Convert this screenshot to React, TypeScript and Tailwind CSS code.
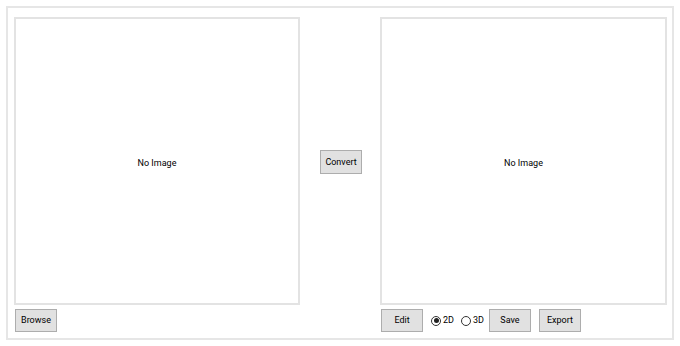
import React from "react";

function Btn({ label, className = "" }: { label: string; className?: string }) {
  return (
    <button
      className={`h-[23px] w-[42px] border border-[#adadad] bg-[#e1e1e1] text-[9px] leading-none text-black flex items-center justify-center ${className}`}
    >
      {label}
    </button>
  );
}

function Radio({ label, checked }: { label: string; checked?: boolean }) {
  return (
    <div className="flex items-center gap-[2px] text-[9px] text-black">
      <span className="w-[10px] h-[10px] rounded-full border border-[#333] flex items-center justify-center bg-white">
        {checked && <span className="w-[5px] h-[5px] rounded-full bg-[#222]" />}
      </span>
      <span>{label}</span>
    </div>
  );
}

function Panel() {
  return (
    <div className="h-[288px] w-full border-2 border-[#e3e3e3] bg-white flex items-center justify-center text-[9px] text-black pt-[6px]">
      No Image
    </div>
  );
}

export default function App() {
  return (
    <div
      className="w-[680px] h-[346px] bg-white pt-[6px] pl-[6px]"
      style={{ fontFamily: 'Roboto, "Noto Sans", sans-serif' }}
    >
      <div className="w-[668px] h-[334px] border-2 border-[#e6e6e6] pt-[9px] pl-[6px] flex">
        <div className="w-[286px] flex flex-col">
          <Panel />
          <div className="mt-[4px] pl-[1px]">
            <Btn label="Browse" />
          </div>
        </div>
        <div className="w-[80px] h-[288px] flex items-center justify-center">
          <Btn label="Convert" className="h-[24px] ml-[2px] mt-[2px]" />
        </div>
        <div className="w-[287px] flex flex-col">
          <Panel />
          <div className="mt-[4px] pl-[1px] flex items-center">
            <Btn label="Edit" />
            <div className="ml-[8px] flex items-center gap-[7px]">
              <Radio label="2D" checked />
              <Radio label="3D" />
            </div>
            <Btn label="Save" className="ml-[5px]" />
            <Btn label="Export" className="ml-[8px]" />
          </div>
        </div>
      </div>
    </div>
  );
}
